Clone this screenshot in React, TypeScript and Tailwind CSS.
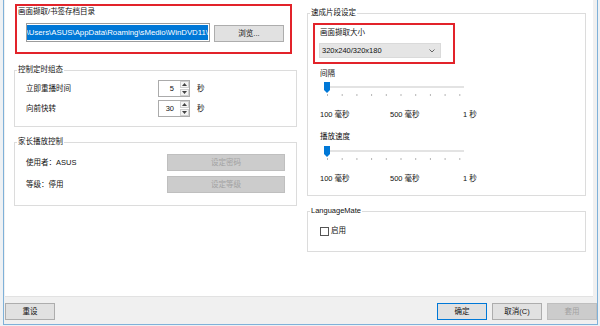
import type { ReactNode } from "react";

const GroupBox = ({
  title,
  className = "",
  children,
}: {
  title: string;
  className?: string;
  children: ReactNode;
}) => (
  <fieldset className={`border border-[#dcdcdc] ${className}`}>
    <legend className="ml-[2px] px-[1px] leading-[10px]">{title}</legend>
    {children}
  </fieldset>
);

const Button = ({
  children,
  className = "",
  disabled = false,
  primary = false,
}: {
  children: ReactNode;
  className?: string;
  disabled?: boolean;
  primary?: boolean;
}) => (
  <div
    className={`flex h-[17px] items-center justify-center border leading-[10px] ${
      disabled
        ? "border-[#bfbfbf] bg-[#cccccc] text-[#a2a2a2]"
        : primary
        ? "border-[#0078d7] bg-[#e1e1e1]"
        : "border-[#adadad] bg-[#e1e1e1]"
    } ${className}`}
  >
    {children}
  </div>
);

const Spinner = ({ value }: { value: string }) => (
  <div className="flex h-[17px] w-[32px] border border-[#ababab] bg-white">
    <div className="flex flex-1 items-center justify-end pr-[6px] leading-[10px]">
      {value}
    </div>
    <div className="flex w-[9px] flex-col gap-[1px]">
      <div className="flex flex-1 items-center justify-center border border-[#cfcfcf] bg-[#f4f4f4]">
        <svg width="5" height="3" viewBox="0 0 5 3">
          <polygon points="0,3 5,3 2.5,0" fill="#444" />
        </svg>
      </div>
      <div className="flex flex-1 items-center justify-center border border-[#cfcfcf] bg-[#f4f4f4]">
        <svg width="5" height="3" viewBox="0 0 5 3">
          <polygon points="0,0 5,0 2.5,3" fill="#444" />
        </svg>
      </div>
    </div>
  </div>
);

const Slider = () => (
  <svg width="142" height="20" viewBox="0 0 142 20" className="ml-[16px]">
    <rect x="1" y="5" width="139" height="2" fill="#e3e3e3" />
    {Array.from({ length: 10 }).map((_, i) => (
      <rect key={i} x={3 + i * 14.7} y="13" width="1" height="2" fill="#b5b5b5" />
    ))}
    <polygon points="0,0 6,0 6,8 3,11 0,8" fill="#0078d7" transform="translate(0,1)" />
  </svg>
);

const SliderLabels = () => (
  <div className="ml-[12px] mt-[9px] flex leading-[10px]">
    <span className="w-[70px]">100 毫秒</span>
    <span className="w-[73px]">500 毫秒</span>
    <span>1 秒</span>
  </div>
);

const App = () => {
  return (
    <div className="h-[326px] w-[600px] bg-[#eef1f4] pl-[3px] font-['Liberation_Sans','Noto_Sans_CJK_SC',sans-serif] text-[7.5px] text-[#111]">
      <div className="flex h-[325px] w-[595px] flex-col border-x border-b border-[#7fb1d9] bg-[#f0f0f0]">
        <div className="ml-[1px] flex h-[297px] w-[588px] border-b border-[#e2e2e2] bg-white">
          {/* left column */}
          <div className="ml-[9px] flex w-[283px] flex-col">
            <div className="ml-[1px] mt-[4px] h-[50px] w-[277px] border-2 border-[#e2232a]">
              <div className="ml-[1px] mt-[1px] leading-[10px]">画面撷取/书签存档目录</div>
              <div className="ml-[9px] mt-[6px] flex items-end gap-[4px]">
                <div className="flex h-[19px] w-[184px] items-center justify-end overflow-hidden border border-[#9c9c9c] bg-white px-[1px]">
                  <span className="whitespace-nowrap bg-[#0078d7] text-[7.8px] leading-[15px] text-white">
                    {"C:\\Users\\ASUS\\AppData\\Roaming\\sMedio\\WinDVD11\\"}
                  </span>
                </div>
                <Button className="w-[70px]">浏览...</Button>
              </div>
            </div>

            <GroupBox title="控制定时组态" className="mt-[11px]">
              <div className="flex flex-col gap-[3px] px-[11px] pb-[9px] pt-[5px]">
                <div className="flex items-center leading-[10px]">
                  <span className="w-[132px]">立即重播时间</span>
                  <Spinner value="5" />
                  <span className="ml-[7px]">秒</span>
                </div>
                <div className="flex items-center leading-[10px]">
                  <span className="w-[132px]">向前快转</span>
                  <Spinner value="30" />
                  <span className="ml-[7px]">秒</span>
                </div>
              </div>
            </GroupBox>

            <GroupBox title="家长播放控制" className="mt-[10px]">
              <div className="flex flex-col gap-[5px] px-[11px] pb-[12px] pt-[7px]">
                <div className="flex items-center leading-[10px]">
                  <span className="w-[141px]">使用者：ASUS</span>
                  <Button disabled className="w-[118px]">
                    设定密码
                  </Button>
                </div>
                <div className="flex items-center leading-[10px]">
                  <span className="w-[141px]">等级：停用</span>
                  <Button disabled className="w-[118px]">
                    设定等级
                  </Button>
                </div>
              </div>
            </GroupBox>
          </div>

          {/* right column */}
          <div className="ml-[10px] flex w-[279px] flex-col">
            <GroupBox title="速成片段设定" className="mt-[8px]">
              <div className="flex flex-col pb-[11px]">
                <div className="ml-[5px] mt-[5px] h-[41px] w-[142px] border-2 border-[#e2232a]">
                  <div className="ml-[5px] mt-[3px] leading-[10px]">画面撷取大小</div>
                  <div className="ml-[4px] mt-[5px] flex h-[15px] w-[122px] items-center justify-between border border-[#dadada] bg-[#e5e5e5] pl-[2px] pr-[5px] leading-[10px]">
                    <span>320x240/320x180</span>
                    <svg width="6" height="4" viewBox="0 0 6 4">
                      <polyline points="0.5,0.5 3,3 5.5,0.5" fill="none" stroke="#555" strokeWidth="0.9" />
                    </svg>
                  </div>
                </div>
                <div className="ml-[12px] mt-[5px] leading-[10px]">间隔</div>
                <div className="mt-[2px]">
                  <Slider />
                </div>
                <SliderLabels />
                <div className="ml-[12px] mt-[12px] leading-[10px]">播放速度</div>
                <div className="mt-[3px]">
                  <Slider />
                </div>
                <SliderLabels />
              </div>
            </GroupBox>

            <GroupBox title="LanguageMate" className="mt-[10px]">
              <div className="flex items-center gap-[2px] pb-[15px] pl-[12px] pt-[10px] leading-[10px]">
                <div className="h-[9px] w-[9px] border border-[#555] bg-white" />
                <span>启用</span>
              </div>
            </GroupBox>
          </div>
        </div>

        <div className="flex h-[27px] items-start pl-[1px] pt-[6px]">
          <Button className="w-[50px]">重设</Button>
          <div className="ml-auto flex gap-[5px]">
            <Button primary className="w-[50px]">
              确定
            </Button>
            <Button className="w-[50px]">取消(C)</Button>
            <Button disabled className="w-[50px]">
              套用
            </Button>
          </div>
        </div>
      </div>
    </div>
  );
};

export default App;
